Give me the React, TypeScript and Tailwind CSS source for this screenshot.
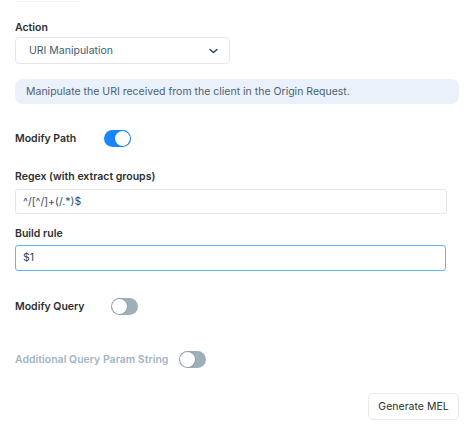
import { useState } from "react";

function Toggle({ on, onChange }: { on: boolean; onChange?: () => void }) {
  return (
    <button
      type="button"
      onClick={onChange}
      className={
        "relative h-[17px] w-[27px] rounded-full " + (on ? "bg-[#1a86fb]" : "bg-[#9db0b8]")
      }
    >
      <span
        className={
          "absolute top-[1px] h-[15px] w-[15px] rounded-full bg-white shadow-[0_0_0_1px_rgba(0,0,0,0.08)] " +
          (on ? "left-[11px]" : "left-[1px]")
        }
      />
    </button>
  );
}

export default function App() {
  const [modifyPath, setModifyPath] = useState(true);
  const [modifyQuery, setModifyQuery] = useState(false);

  return (
    <div className="h-[430px] w-[469px] bg-white font-['Inter',sans-serif] text-[10.5px] text-[#2b2f33]">
      <div className="ml-[15px] h-[2px] w-[66px] rounded-b border-b border-[#f1f3f4]" />
      <div className="flex flex-col px-[15px] pr-[10px] pt-[19px]">
        <label className="font-semibold leading-[14px] text-[#2c2f31]">Action</label>
        <div className="mt-[2px] flex h-[27px] w-[215px] items-center justify-between rounded-[4px] border border-[#e3e8ec] pl-[13px] pr-[9px] text-[#3f5b72]">
          <span>URI Manipulation</span>
          <svg width="13" height="12" viewBox="0 0 24 24" fill="none" stroke="#1f4a6b" strokeWidth="3" strokeLinecap="round" strokeLinejoin="round">
            <path d="M5 9l7 6 7-6" />
          </svg>
        </div>
        <div className="mt-[15px] flex h-[25px] items-center rounded-[8px] bg-[#eaf1fb] px-[11px] text-[#4b6277]">
          Manipulate the URI received from the client in the Origin Request.
        </div>

        <div className="mt-[26px] flex items-center">
          <span className="w-[89px] font-semibold text-[#2c2f31]">Modify Path</span>
          <Toggle on={modifyPath} onChange={() => setModifyPath(!modifyPath)} />
        </div>

        <label className="mt-[23px] font-semibold leading-[14px] text-[#2c2f31]">Regex (with extract groups)</label>
        <div className="mt-[5px] mr-[12px] flex h-[25px] items-center rounded-[3px] border border-[#e3e8ec] px-[7px] text-[#34495c]">
          ^/[^/]+(/.*)$
        </div>

        <label className="mt-[13px] font-semibold leading-[14px] text-[#2c2f31]">Build rule</label>
        <div className="mt-[4px] mr-[13px] flex h-[26px] items-center rounded-[3px] border border-[#5ab9fb] px-[7px] text-[#34495c]">
          $1
        </div>

        <div className="mt-[27px] flex items-center">
          <span className="w-[96px] font-semibold text-[#2c2f31]">Modify Query</span>
          <Toggle on={modifyQuery} onChange={() => setModifyQuery(!modifyQuery)} />
        </div>

        <div className="mt-[36px] flex items-center">
          <span className="w-[164px] font-semibold text-[#a3b6c2]">Additional Query Param String</span>
          <Toggle on={false} />
        </div>

        <div className="mt-[25px] flex justify-end">
          <button
            type="button"
            className="h-[27px] w-[91px] rounded-[5px] border border-[#e6ebee] text-[#2c2f31]"
          >
            Generate MEL
          </button>
        </div>
      </div>
    </div>
  );
}
